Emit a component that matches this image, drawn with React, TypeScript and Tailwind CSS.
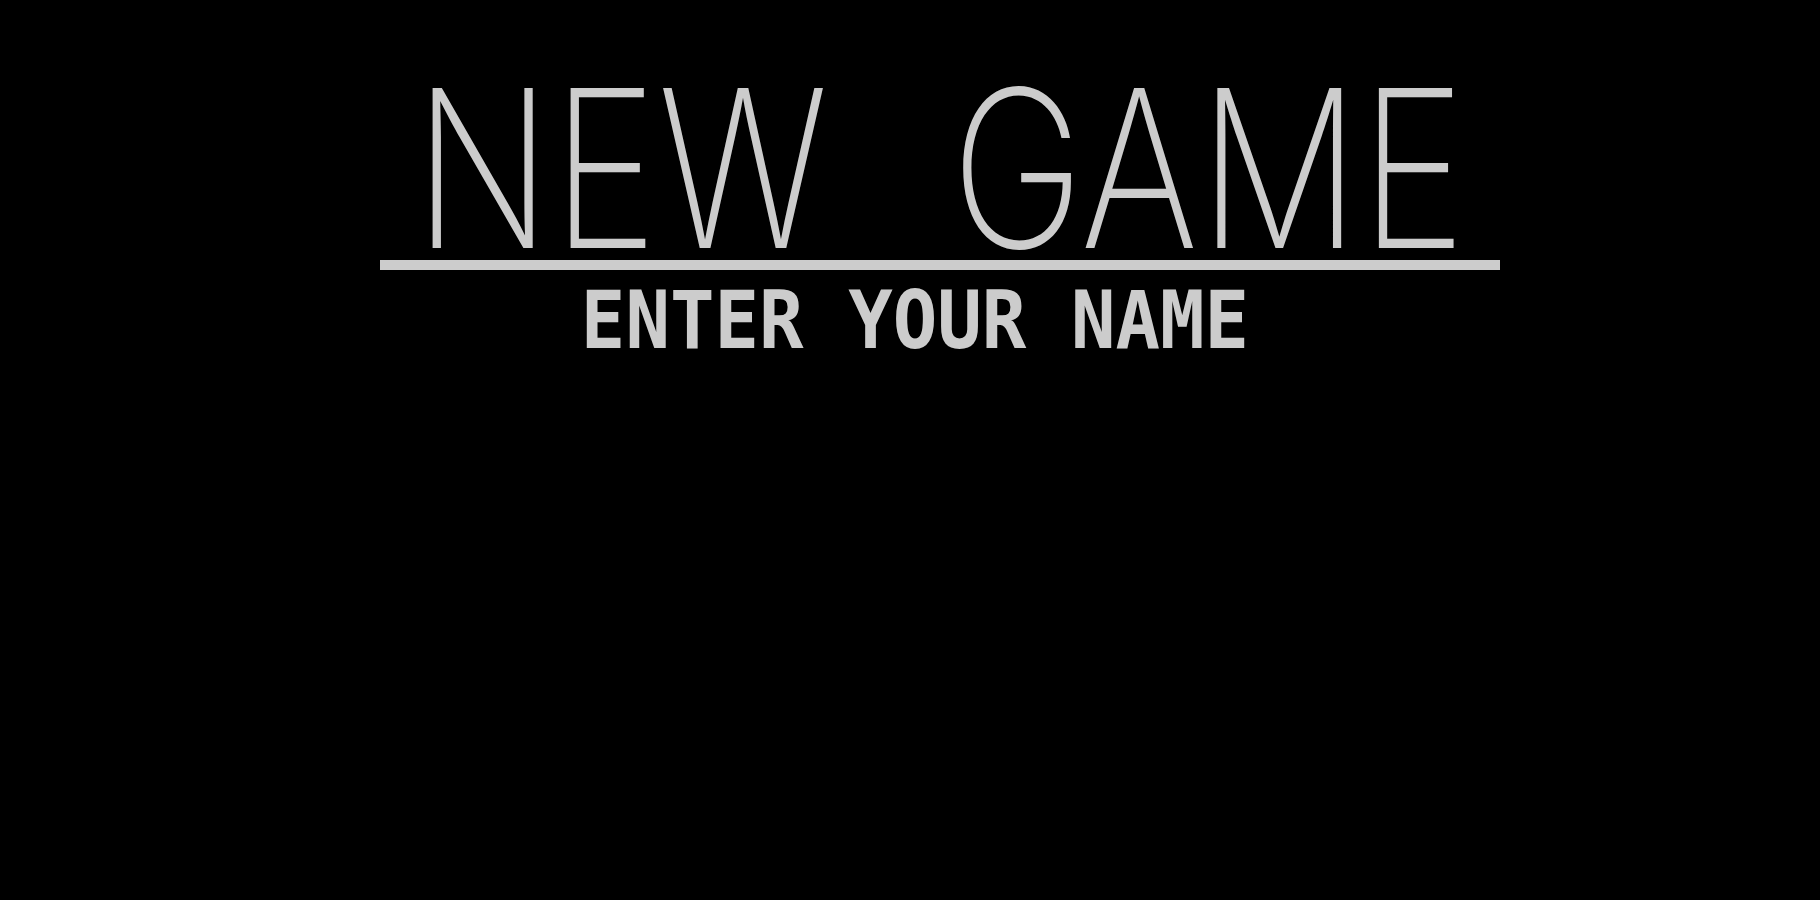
export default function App() {
  return (
    <div className="min-h-[900px] w-full bg-black text-[#cccccc]">
      <div className="ml-[380px] flex w-[1120px] flex-col items-center pt-[109px]">
        <h1 className="origin-bottom scale-y-[1.223] font-['Inter','DejaVu_Sans',sans-serif] text-[180px] font-extralight leading-[151px] tracking-[0px] [word-spacing:72px]">
          NEW GAME
        </h1>
        <div className="h-[10px] w-full bg-[#cccccc]" />
        <p className="mr-[50px] mt-[18px] origin-top scale-y-[1.08] font-['DejaVu_Sans_Mono','Liberation_Mono',monospace] text-[74px] font-bold leading-[60px]">
          ENTER YOUR NAME
        </p>
      </div>
    </div>
  );
}
